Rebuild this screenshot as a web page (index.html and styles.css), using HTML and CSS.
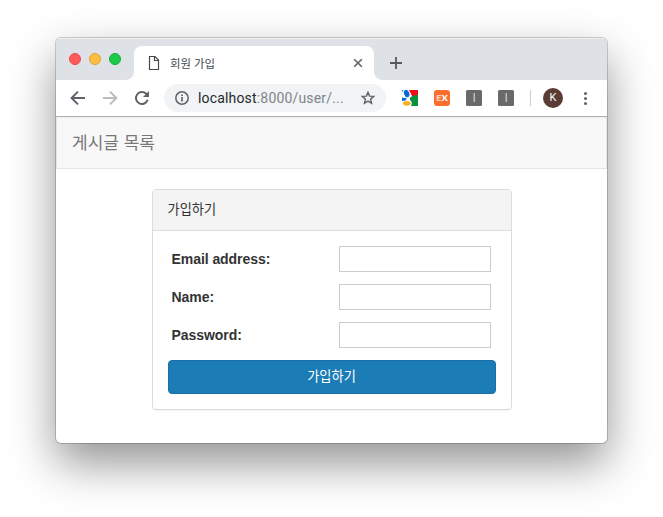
FILE: index.html
```html
<!DOCTYPE html>
<html lang="ko">
<head>
<meta charset="utf-8">
<title>회원 가입</title>
<link rel="stylesheet" href="styles.css">
</head>
<body>
<div class="window">
  <div class="tabstrip">
    <div class="lights"><i class="light red"></i><i class="light amber"></i><i class="light green"></i></div>
    <div class="tab">
      <svg class="doc" width="12" height="16" viewBox="0 0 12 16"><path d="M1.5 1.5H7L10.5 5V14.5H1.5ZM6.5 1.5V5.5H10.5" fill="none" stroke="#46484b" stroke-width="1.2"/></svg>
      <span class="tab-title">회원 가입</span>
      <svg class="close" width="10" height="10" viewBox="0 0 10 10"><path d="M1.2 1.2L8.8 8.8M8.8 1.2L1.2 8.8" stroke="#5f6368" stroke-width="1.6"/></svg>
    </div>
    <svg class="plus" width="12" height="12" viewBox="0 0 12 12"><path d="M6 0V12M0 6H12" stroke="#55585d" stroke-width="1.8"/></svg>
  </div>
  <div class="toolbar">
    <span class="cell"><svg width="16" height="16" viewBox="0 0 16 16"><path d="M15 8H2.5M8 1.6L1.6 8L8 14.4" fill="none" stroke="#5f6368" stroke-width="2"/></svg></span>
    <span class="cell"><svg width="16" height="16" viewBox="0 0 16 16"><path d="M1 8H13.5M8 1.6L14.4 8L8 14.4" fill="none" stroke="#babcbe" stroke-width="2"/></svg></span>
    <span class="cell"><svg width="16" height="16" viewBox="0 0 16 16"><path d="M13.7 9.8A6 6 0 1 1 12.2 3.7L13.5 5" fill="none" stroke="#5f6368" stroke-width="2"/><path d="M15 1V7H9Z" fill="#5f6368"/></svg></span>
    <div class="omnibox">
      <svg width="14" height="14" viewBox="0 0 14 14"><circle cx="7" cy="7" r="6.2" fill="none" stroke="#5f6368" stroke-width="1.5"/><path d="M7 6V10.5M7 3.4V5" stroke="#5f6368" stroke-width="1.7"/></svg>
      <span class="url">localhost<span class="path">:8000/user/...</span></span>
      <svg class="star" width="14" height="14" viewBox="0 0 14 14"><path d="M7 1.2L8.6 5.1L12.8 5.4L9.6 8.2L10.6 12.3L7 10.1L3.4 12.3L4.4 8.2L1.2 5.4L5.4 5.1Z" fill="none" stroke="#5f6368" stroke-width="1.4"/></svg>
    </div>
    <div class="extensions">
      <span class="cell"><svg width="16" height="16" viewBox="0 0 16 16"><path d="M0 0H16V16H0Z" fill="#fff"/><path d="M7 0H16V6H10Z" fill="#f20d19"/><path d="M8 8Q10 5 16 5V16H9Q11 12 8 10Z" fill="#07923d"/><ellipse cx="4.7" cy="3.6" rx="2.6" ry="3.8" transform="rotate(-20 4.7 3.6)" fill="#0968d6"/><path d="M0 0H1.5L0 2ZM0 7.5L5 8.5L3.5 10.5L0 11Z" fill="#0968d6"/><ellipse cx="4.8" cy="13.3" rx="3.8" ry="2.4" fill="#f7b021"/></svg></span>
      <span class="cell"><span class="ext orange"><span class="ex-mark"><span class="ex-e">E</span>X</span></span></span>
      <span class="cell"><span class="ext">I</span></span>
      <span class="cell"><span class="ext">I</span></span>
    </div>
    <i class="divider"></i>
    <span class="avatar">K</span>
    <span class="menu"><i></i><i></i><i></i></span>
  </div>
  <div class="page">
    <nav class="navbar">게시글 목록</nav>
    <section class="panel">
      <h1 class="panel-heading">가입하기</h1>
      <form class="panel-body">
        <div class="row"><label for="email">Email address:</label><input id="email" type="text"></div>
        <div class="row"><label for="name">Name:</label><input id="name" type="text"></div>
        <div class="row"><label for="password">Password:</label><input id="password" type="password"></div>
        <button class="submit" type="button">가입하기</button>
      </form>
    </section>
  </div>
</div>
</body>
</html>
```
FILE: styles.css
```css
* { box-sizing: border-box; }
body {
  margin: 0;
  padding: 38px 56px 0;
  height: 517px;
  overflow: hidden;
  background: #fff;
  font-family: "Liberation Sans", "Noto Sans CJK KR", sans-serif;
}
svg { display: block; flex: none; }
.window {
  width: 551px;
  height: 405px;
  border-radius: 5px;
  background: #fff;
  overflow: hidden;
  box-shadow: 0 0 0 1px rgba(0, 0, 0, .18), 0 20px 46px rgba(0, 0, 0, .43);
}
.tabstrip {
  display: flex;
  height: 42px;
  padding-top: 7px;
  background: #dee1e6;
  border-top: 1px solid #eff1f3;
}
.lights { display: flex; gap: 8px; width: 78px; padding: 7px 0 0 13px; }
.light { width: 12px; height: 12px; border-radius: 50%; border: 1px solid; }
.red { background: #ff5b5b; border-color: #e9484b; }
.amber { background: #ffbd40; border-color: #e0a137; }
.green { background: #1ccb4b; border-color: #14ad3c; }
.tab {
  position: relative;
  display: flex;
  align-items: center;
  width: 240px;
  height: 34px;
  padding: 0 11px 0 14px;
  border-radius: 8px 8px 0 0;
  background: #fff;
}
.tab::before, .tab::after {
  content: "";
  position: absolute;
  bottom: 0;
  width: 8px;
  height: 8px;
}
.tab::before { left: -8px; background: radial-gradient(circle at 0 0, transparent 7.5px, #fff 8px); }
.tab::after { right: -8px; background: radial-gradient(circle at 100% 0, transparent 7.5px, #fff 8px); }
.tab-title { flex: 1; margin: 1px 0 0 10px; font-size: 11.4px; line-height: 16px; color: #45494d; }
.plus { margin: 11px 0 0 16px; }
.toolbar {
  display: flex;
  align-items: center;
  height: 37px;
  padding-left: 6px;
  border-bottom: 1px solid #b1b1b1;
}
.cell { display: flex; flex: none; align-items: center; justify-content: center; width: 32px; }
.omnibox {
  display: flex;
  align-items: center;
  width: 222px;
  height: 28px;
  margin: 0 8px 0 6px;
  padding: 0 11px;
  border-radius: 14px;
  background: #f1f3f4;
}
.url { flex: 1; margin-left: 9px; font: 14px/20px Roboto, sans-serif; letter-spacing: .17px; color: #25282b; white-space: nowrap; }
.path { color: #80868b; }
.extensions { display: flex; }
.ext {
  width: 16px;
  height: 16px;
  border-radius: 1.5px;
  background: #696969;
  color: #fff;
  font: 300 12px/16px Roboto, sans-serif;
  text-align: center;
}
.orange { border-radius: 3px; background: #fa6f30; font: 700 8px/16px "Open Sans", sans-serif; }
.ex-mark { display: inline-block; transform: scaleX(1.2); }
.ex-e { opacity: .7; }
.divider { width: 1px; height: 16px; margin: 0 12px 0 8px; background: #ccced1; }
.avatar {
  width: 20px;
  height: 20px;
  border-radius: 50%;
  background: #5b3c34;
  color: #fff;
  font: 11px/20px Roboto, sans-serif;
  text-align: center;
}
.menu { display: flex; flex-direction: column; gap: 2px; margin-left: 21px; }
.menu i { width: 3px; height: 3px; border-radius: 50%; background: #5f6368; }
.navbar {
  height: 52px;
  padding-left: 15px;
  border: 1px solid #e5e5e5;
  border-top-color: #eee;
  background: #f8f8f8;
  color: #777;
  font-size: 17px;
  line-height: 51px;
}
.panel {
  width: 360px;
  margin: 20px 0 0 96px;
  border: 1px solid #dcdcdc;
  border-radius: 4px;
  box-shadow: 0 1px 1px rgba(0, 0, 0, .05);
}
.panel-heading {
  height: 41px;
  margin: 0;
  padding-left: 14.5px;
  border-bottom: 1px solid #dcdcdc;
  border-radius: 3px 3px 0 0;
  background: #f4f4f4;
  color: #333;
  font-size: 13.2px;
  font-weight: 400;
  line-height: 40px;
}
.panel-body { height: 178px; margin: 0; padding: 15px; }
.row {
  display: flex;
  align-items: center;
  justify-content: space-between;
  height: 26px;
  margin-bottom: 12px;
  padding: 0 5px 0 3.5px;
}
.row label { color: #333; font-size: 14px; font-weight: 700; letter-spacing: -.06px; line-height: 20px; }
.row input { width: 152px; height: 26px; border: 1px solid #ccc; background: #fff; }
.submit {
  display: block;
  width: 328px;
  height: 34px;
  padding: 0 1px 1px 0;
  border: 1px solid #1a6fa5;
  border-radius: 4px;
  background: #1b7cb6;
  color: #fff;
  font: 13.2px/20px "Liberation Sans", "Noto Sans CJK KR", sans-serif;
}
```
